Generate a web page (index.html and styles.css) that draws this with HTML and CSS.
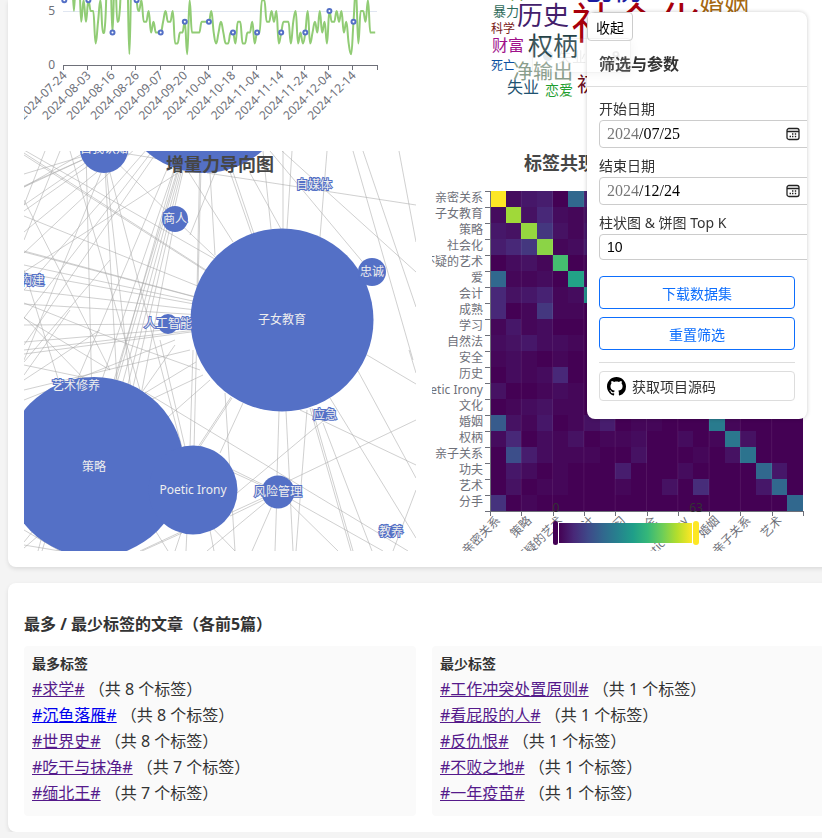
FILE: index.html
```html
<!DOCTYPE html>
<html lang="zh-CN">
<head>
<meta charset="utf-8">
<title>标签统计</title>
<link rel="stylesheet" href="styles.css">
</head>
<body>
<main class="page">
  <section class="card charts">
    <svg class="chart" id="trend" viewBox="0 0 392 135" role="img" aria-label="趋势图"></svg>
    <svg class="chart" id="cloud" viewBox="0 0 392 135" role="img" aria-label="词云"></svg>
    <svg class="chart" id="graph" viewBox="0 0 392 400" role="img" aria-label="增量力导向图"></svg>
    <svg class="chart" id="heat" viewBox="0 0 392 400" role="img" aria-label="标签共现热力图"></svg>
  </section>

  <section class="card articles">
    <h3 class="articles-title">最多 / 最少标签的文章（各前5篇）</h3>
    <div class="columns">
      <div class="box">
        <h4 class="box-title">最多标签</h4>
        <ul class="list">
          <li><a class="seen" href="#a1">#求学#</a> （共 8 个标签）</li>
          <li><a class="fresh" href="#a2">#沉鱼落雁#</a> （共 8 个标签）</li>
          <li><a class="seen" href="#a3">#世界史#</a> （共 8 个标签）</li>
          <li><a class="seen" href="#a4">#吃干与抹净#</a> （共 7 个标签）</li>
          <li><a class="seen" href="#a5">#缅北王#</a> （共 7 个标签）</li>
        </ul>
      </div>
      <div class="box">
        <h4 class="box-title">最少标签</h4>
        <ul class="list">
          <li><a class="seen" href="#b1">#工作冲突处置原则#</a> （共 1 个标签）</li>
          <li><a class="seen" href="#b2">#看屁股的人#</a> （共 1 个标签）</li>
          <li><a class="seen" href="#b3">#反仇恨#</a> （共 1 个标签）</li>
          <li><a class="seen" href="#b4">#不败之地#</a> （共 1 个标签）</li>
          <li><a class="seen" href="#b5">#一年疫苗#</a> （共 1 个标签）</li>
        </ul>
      </div>
    </div>
  </section>
</main>

<aside class="panel">
  <button class="collapse" type="button">收起</button>
  <h3 class="panel-title">筛选与参数</h3>
  <form class="filters">
    <label for="start">开始日期</label>
    <div class="field">
      <input class="date" id="start" type="text" value="2024/07/25">
      <svg class="calendar" viewBox="0 0 14 14" aria-hidden="true"><rect x="1" y="1.5" width="12" height="11" rx="2"/><path d="M1 4.5h12"/><path class="dots" d="M6 7h1.4M8.8 7h1.4M3.6 9.6H5M6 9.6h1.4M8.8 9.6h1.4"/></svg>
    </div>
    <label for="end">结束日期</label>
    <div class="field">
      <input class="date" id="end" type="text" value="2024/12/24">
      <svg class="calendar" viewBox="0 0 14 14" aria-hidden="true"><rect x="1" y="1.5" width="12" height="11" rx="2"/><path d="M1 4.5h12"/><path class="dots" d="M6 7h1.4M8.8 7h1.4M3.6 9.6H5M6 9.6h1.4M8.8 9.6h1.4"/></svg>
    </div>
    <label for="topk">柱状图 &amp; 饼图 Top K</label>
    <div class="field number"><input id="topk" type="number" value="10"></div>
    <button class="action" type="button">下载数据集</button>
    <button class="action" type="button">重置筛选</button>
  </form>
  <div class="source">
    <a class="repo" href="#source">
      <svg class="github" viewBox="0 0 16 16" aria-hidden="true"><path d="M8 0C3.58 0 0 3.58 0 8c0 3.54 2.29 6.53 5.47 7.59.4.07.55-.17.55-.38 0-.19-.01-.82-.01-1.49-2.01.37-2.53-.49-2.69-.94-.09-.23-.48-.94-.82-1.13-.28-.15-.68-.52-.01-.53.63-.01 1.08.58 1.23.82.72 1.21 1.87.87 2.33.66.07-.52.28-.87.51-1.07-1.78-.2-3.64-.89-3.64-3.95 0-.87.31-1.59.82-2.15-.08-.2-.36-1.02.08-2.12 0 0 .67-.21 2.2.82.64-.18 1.32-.27 2-.27s1.36.09 2 .27c1.53-1.04 2.2-.82 2.2-.82.44 1.1.16 1.92.08 2.12.51.56.82 1.27.82 2.15 0 3.07-1.87 3.75-3.65 3.95.29.25.54.73.54 1.48 0 1.07-.01 1.93-.01 2.2 0 .21.15.46.55.38A8.01 8.01 0 0 0 16 8c0-4.42-3.58-8-8-8z"/></svg>
      获取项目源码
    </a>
  </div>
</aside>
<div class="tooltip" aria-hidden="true"><span class="dot"></span>失业<b>9</b></div>
<script src="charts.js"></script>
</body>
</html>
```

FILE: styles.css
```css
* {
  box-sizing: border-box;
}

html {
  overflow: hidden;
}

body {
  margin: 0;
  background: #f4f4f4;
  color: #333;
  font-family: "Noto Sans", "Noto Sans CJK SC", sans-serif;
  font-size: 16px;
}

h3,
h4,
ul {
  margin: 0;
  padding: 0;
}

/* The cards run a little past the right edge of the window. */
.page {
  width: calc(100% + 10px);
  margin-left: 8px;
  display: grid;
  gap: 16px;
}

.card {
  background: #fff;
  border-radius: 8px;
  padding: 16px;
  box-shadow: 0 2px 4px rgba(0, 0, 0, 0.1);
}

.charts,
.columns {
  display: grid;
  grid-template-columns: 1fr 1fr;
  gap: 16px;
}

.charts {
  padding-top: 0;
  border-radius: 0 0 8px 8px;
}

.chart {
  display: block;
  width: 100%;
  overflow: hidden;
  font-size: 12px;
}

.chart text {
  dominant-baseline: central;
}

.axis {
  stroke: #6e7079;
  fill: none;
}

.split {
  stroke: #e0e6f1;
}

.tick-label {
  fill: #6e7079;
}

.series {
  fill: none;
  stroke: #91cc75;
  stroke-width: 2;
  stroke-linejoin: round;
}

.marker {
  fill: #fff;
  stroke: #5470c6;
  stroke-width: 2;
}

.edge {
  stroke: #aaa;
  stroke-opacity: 0.55;
}

.node {
  fill: #5470c6;
}

.node-label {
  fill: #eee;
  stroke: #5470c6;
  stroke-width: 2px;
  paint-order: stroke;
  text-anchor: middle;
}

.chart-title {
  fill: #464646;
  font-size: 18px;
  font-weight: bold;
  text-anchor: middle;
}

.cell {
  shape-rendering: crispEdges;
}

.seam {
  stroke: #fff;
  stroke-opacity: 0.08;
}

.end {
  text-anchor: end;
}

.middle {
  text-anchor: middle;
}

.articles {
  padding-top: 29px;
}

.articles-title {
  font-size: 16px;
  line-height: 24px;
  margin-bottom: 10px;
}

.box {
  background: #fafafa;
  border-radius: 4px;
  padding: 8px 8px 10px;
}

.box-title {
  font-size: 14px;
  line-height: 20px;
  margin-bottom: 2px;
}

.list {
  list-style: none;
  line-height: 26px;
}

.seen {
  color: #551a8b;
}

.fresh {
  color: #0000ee;
}

.panel {
  position: fixed;
  top: 12px;
  right: 15px;
  width: 220px;
  background: #fff;
  border-radius: 8px;
  box-shadow: 0 0 4px rgba(0, 0, 0, 0.2);
  overflow: hidden;
  font-size: 14px;
  padding-bottom: 18px;
}

.panel button {
  font-family: inherit;
  font-size: 14px;
  display: block;
  padding: 0;
}

.collapse {
  width: 46px;
  height: 29px;
  background: #fff;
  color: #000;
  border: 1px solid #ccc;
  border-radius: 4px;
}

.panel-title {
  font-size: 16px;
  line-height: 24px;
  padding: 11px 12px 10px;
  border-bottom: 1px solid #ddd;
}

.filters {
  padding: 12px 12px 0;
}

.filters label {
  display: block;
  line-height: 20px;
}

.field {
  position: relative;
  width: calc(100% + 18px);
  height: 28px;
  margin: 1px 0 8px;
  border: 1px solid #ccc;
  border-radius: 4px;
}

.field input {
  display: block;
  width: 100%;
  height: 100%;
  border: 0;
  padding: 0 7px;
  background: none;
  font-family: "Liberation Sans", sans-serif;
  font-size: 14px;
}

/* The year segment is dimmer than the rest of the date. */
.field .date {
  font-family: "Liberation Serif", serif;
  font-size: 16px;
  background: linear-gradient(90deg, #757575 39px, #000 39px);
  background-clip: text;
  -webkit-background-clip: text;
  color: transparent;
}

.number {
  height: 26px;
  margin-bottom: 16px;
}

.calendar {
  position: absolute;
  right: 12px;
  top: 6px;
  width: 14px;
  height: 14px;
  fill: none;
  stroke: #222;
  stroke-width: 1.3;
}

.dots {
  stroke-width: 1.5;
}

.panel .action {
  width: 100%;
  height: 33px;
  margin-bottom: 8px;
  background: #fff;
  border: 1px solid #0d6efd;
  border-radius: 4px;
  color: #0d6efd;
}

.source {
  margin: 12px 12px 0;
  padding-top: 8px;
  border-top: 1px solid #ddd;
}

.repo {
  display: flex;
  align-items: center;
  gap: 6px;
  height: 30px;
  padding: 0 7px;
  border: 1px solid #ddd;
  border-radius: 4px;
  color: #333;
  text-decoration: none;
}

.github {
  width: 19px;
  height: 19px;
  fill: #000;
}

/* Tooltip at the end of its fade-out. */
.tooltip {
  position: fixed;
  top: 38px;
  right: 191px;
  display: flex;
  align-items: center;
  gap: 5px;
  width: 99px;
  height: 35px;
  padding: 0 10px;
  background: #fff;
  border: 1px solid #999;
  border-radius: 4px;
  box-shadow: 1px 2px 10px rgba(0, 0, 0, 0.3);
  color: #666;
  font-size: 14px;
  opacity: 0.12;
}

.tooltip b {
  margin-left: auto;
}

.dot {
  width: 10px;
  height: 10px;
  border-radius: 50%;
  background: #1f5270;
}
```

FILE: charts.js
```js
const NS = 'http://www.w3.org/2000/svg';

function add(parent, tag, attrs, text) {
  const el = document.createElementNS(NS, tag);
  for (const key in attrs) el.setAttribute(key, attrs[key]);
  if (text !== undefined) el.textContent = text;
  parent.appendChild(el);
  return el;
}

function line(svg, cls, x1, y1, x2, y2) {
  add(svg, 'line', { class: cls, x1, y1, x2, y2 });
}

function drawTrend() {
  const svg = document.getElementById('trend');
  const values = [
    6,7,8,9,5,9,9,4,6,4, 9,5,5,2,4,6,3,4,9,9, 3,9,4,5,9,9,9,1,9,9,
    6,5,6,4,4,5,3,4,3,3, 3,4,5,4,4,5,2,2,3,3, 4,1,6,3,3,3,3,4,4,4,
    4,5,3,2,3,4,3,2,2,3, 3,2,4,4,2,2,3,3,4,2, 3,3,6,6,4,4,5,4,5,2,
    3,4,4,4,2,4,5,2,3,2, 3,5,2,3,4,3,5,3,4,2, 5,4,4,5,4,5,3,4,2,1,
    4,7,2,5,5,4,6,3,3,3
  ];
  values[10] = 6;
  const dates = ['2024-07-24','2024-08-03','2024-08-16','2024-08-26','2024-09-07','2024-09-20',
    '2024-10-04','2024-10-18','2024-11-04','2024-11-14','2024-11-24','2024-12-04','2024-12-14'];
  const step = 2.41;
  const px = i => 40.3 + i * step;
  const py = v => 65 - v * 10.8;
  line(svg, 'split', 39, 11.5, 353, 11.5);
  line(svg, 'axis', 39, 65.5, 354, 65.5);
  line(svg, 'axis', 353.5, 65, 353.5, 70);
  add(svg, 'text', { class: 'tick-label end', x: 31, y: 10 }, '5');
  add(svg, 'text', { class: 'tick-label end', x: 31, y: 64 }, '0');

  const slope = i => {
    if (i === 0 || i === values.length - 1) return 0;
    const a = values[i] - values[i - 1], b = values[i + 1] - values[i];
    return a * b <= 0 ? 0 : (a + b) / 2;
  };
  const reach = 0.45;
  let d = `M${px(0)} ${py(values[0])}`;
  for (let i = 1; i < values.length; i++) {
    d += `C${px(i - 1 + reach)} ${py(values[i - 1] + slope(i - 1) * reach)} ` +
         `${px(i - reach)} ${py(values[i] - slope(i) * reach)} ${px(i)} ${py(values[i])}`;
  }
  add(svg, 'path', { class: 'series', d });
  dates.forEach((date, k) => {
    const x = px(k * 10);
    const tick = Math.round(x - 1.2) + 0.5;
    line(svg, 'axis', tick, 65, tick, 70);
    add(svg, 'circle', { class: 'marker', cx: x, cy: py(values[k * 10]), r: 2 });
    add(svg, 'text', { class: 'tick-label end', transform: `translate(${x} 73) rotate(-45)` }, date);
  });
}

function drawCloud() {
  const svg = document.getElementById('cloud');
  [
    ['神', 86, -9, 20, '#5a8a14'], ['创伤', 181, -13, 30, '#1c1ca0'],
    ['暴力', 74, 11, 13, '#2e6b5a'], ['历史', 111, 15, 26, '#43206b'],
    ['科学', 71, 28, 12, '#7a1a1a'], ['财富', 76, 45, 16, '#a0108a'],
    ['权柄', 121, 45, 25, '#264348'], ['死亡', 71, 65, 12, '#0b4fa0'],
    ['净输出', 111, 71, 20, '#8a9e8c'], ['失业', 91, 87, 16, '#1f5270'],
    ['恋爱', 127, 89, 14, '#1f9d2f'], ['初恋', 165, 84, 20, '#6b1020'],
    ['社会化', 204, 22, 43, '#a8000c'], ['婚姻', 292, 3, 25, '#a5670f']
  ].forEach(([word, x, y, size, fill]) => {
    add(svg, 'text', { class: 'middle', x, y, 'font-size': size, fill }, word);
  });
}

function drawGraph() {
  const svg = add(document.getElementById('graph'), 'g', { transform: 'translate(-24 -151)' });
  const edges = [
    [24,155,206,271],[24,153,206,270],[24,150,220,262],[104,150,24,187],[104,150,24,186],[104,150,24,205],
    [104,150,24,174],[282,320,24,252],[282,320,24,251],[282,320,24,265],[282,320,24,273],[282,320,24,290],
    [282,320,24,304],[168,324,24,325],[282,320,24,216],[282,320,24,342],[282,320,24,350],[282,320,24,354],
    [203,85,24,187],[203,85,24,232],[203,85,24,253],[203,85,24,290],[203,85,24,318],[203,85,24,345],
    [203,85,75,385],[203,85,95,400],[203,85,108,400],[203,85,112,400],[203,85,118,400],[203,85,124,400],
    [203,85,130,400],[203,85,24,211],[260,120,24,272],[203,85,193,490],[180,151,110,400],
    [104,150,118,400],[104,150,193,490],[104,150,132,400],[86,151,92,400],[104,150,175,219],[104,150,203,166],
    [24,200,110,370],[70,151,140,390],[45,151,24,205],[24,318,110,370],[24,317,90,385],[60,151,24,240],
    [24,303,130,345],[130,345,200,370],[24,270,60,385],[24,375,70,310],[24,362,110,260],[24,380,100,330],
    [24,365,120,385],[24,400,175,340],[24,390,190,350],[175,219,282,320],[175,219,140,400],[110,151,24,360],
    [270,151,371,272],[282,151,416,272],[353,151,413,360],[363,151,416,307],[399,151,416,242],[327,151,320,237],
    [292,151,287,229],[283,151,283,229],[263,151,271,229],[250,173,281,229],[230,172,252,235],[233,172,254,234],
    [207,173,416,205],[186,168,233,242],[210,173,215,255],[215,173,190,235],[200,151,197,290],
    [367,355,416,384],[409,350,416,373],[358,371,416,478],[330,398,416,538],[300,410,416,465],[416,420,278,486],
    [145,392,408,551],[237,493,323,421],[279,411,277,477],[286,411,293,551],[307,410,296,551],[310,408,351,551],
    [312,408,353,551],[323,423,372,551],[416,490,393,551],[278,492,383,551],[278,492,338,551],[278,492,252,551],
    [277,492,275,551],[278,492,207,551],[233,470,278,492],[230,471,278,493],[230,513,278,491],[230,516,278,493],
    [208,520,214,551],[205,520,235,551],[225,393,235,551],[231,397,198,447],[232,398,199,448],[243,403,220,453],
    [196,362,145,393],[203,375,150,400],[210,380,168,417],[193,350,190,447],[160,340,185,447],[175,345,140,395],
    [24,530,60,551],[24,545,60,551],[45,525,38,551],[24,548,45,530],[24,542,42,520],[185,530,140,551],
    [182,530,175,551],[187,530,186,551],[155,530,168,551],[182,533,142,551],[50,525,42,551]
  ];
  edges.forEach(e => line(svg, 'edge', ...e));
  const nodes = [
    ['自我认知', 104, 149, 24], ['', 204, 85, 88], ['商人', 175, 219, 13], ['子女教育', 282, 320, 91.5],
    ['忠诚', 372, 272, 14], ['人工智能', 168, 324, 10], ['自媒体', 314, 185, 6], ['自我构建', 20, 281, 4],
    ['策略', 94, 467, 90], ['艺术修养', 76, 386, 6], ['Poetic Irony', 193, 490, 44.5],
    ['风险管理', 278, 492, 16.5], ['应急', 325, 415, 6], ['教养', 391, 532, 6]
  ];
  nodes.forEach(([, cx, cy, r]) => add(svg, 'circle', { class: 'node', cx, cy, r }));
  nodes.forEach(([name, x, y]) => {
    if (name) add(svg, 'text', { class: 'node-label', x, y: y - 1 }, name);
  });
  add(svg, 'text', { class: 'chart-title', x: 220, y: 164 }, '增量力导向图');
}

function drawHeat() {
  const svg = document.getElementById('heat');
  const tags = ['亲密关系','子女教育','策略','社会化','怀疑的艺术','爱','会计','成熟','学习','自然法',
    '安全','历史','Poetic Irony','文化','婚姻','权柄','亲子关系','功夫','艺术','分手'];
  const rows = [
    [63,2,4,5,0,21,6],
    [2,54,3,7,2,1,3],
    [4,3,53,10,3,1,4],
    [5,7,10,52,1,2,5],
    [0,2,3,1,44,0,1],
    [21,1,1,2,0,36,2],
    [7,3,4,6,1,2,32],
    [7,0,1,10,1,1,0],
    [1,4,1,2,0,0,0],
    [2,3,4,2,2,1,0],
    [1,2,1,0,1,0,0],
    [0,2,1,2,7,0,0],
    [3,0,0,1,2,1,0],
    [0,1,2,3,1,1,0],
    [18,3,1,4,0,1,3,5,0,1,1,0,0,0,26,1],
    [2,7,0,2,1,3,0,1,1,2,0,0,2,0,1,25,3],
    [0,15,5,2,1,1,1,0,0,3,0,0,0,1,0,3,24],
    [0,4,2,0,1,0,0,0,5,0,0,0,2,0,0,0,0,21,4],
    [0,3,0,1,1,0,0,0,1,0,0,3,0,8,0,0,0,4,21],
    [9,0,1,0,0,0,0,0,0,0,0,0,0,0,0,0,0,0,0,21]
  ];
  const scale = [[68,1,84],[72,40,120],[62,74,137],[49,104,142],[38,130,142],
    [31,158,137],[53,183,121],[109,205,89],[180,222,44],[253,231,37]];
  const color = v => {
    const t = v / 63 * (scale.length - 1);
    const i = Math.min(Math.floor(t), scale.length - 2);
    return `rgb(${scale[i].map((c, k) => Math.round(c + (scale[i + 1][k] - c) * (t - i)))})`;
  };
  const left = 58, top = 40, w = 15.65, h = 16;
  add(svg, 'rect', { x: left, y: top, width: w * 20, height: 320, fill: color(0) });
  rows.forEach((row, r) => row.forEach((v, c) => {
    if (v) add(svg, 'rect', { class: 'cell', x: left + c * w, y: top + r * h, width: w, height: h, fill: color(v) });
  }));
  for (let c = 2; c < 20; c += 2) line(svg, 'seam', left + c * w, top, left + c * w, 360);

  line(svg, 'axis', 58.5, 40, 58.5, 360);
  line(svg, 'axis', 58, 360.5, 372, 360.5);
  for (let i = 0; i <= 20; i++) line(svg, 'axis', 53, top + i * h + 0.5, 58, top + i * h + 0.5);
  for (let i = 0; i <= 20; i += 2) {
    const x = Math.round(left + i * w) + 0.5;
    line(svg, 'axis', x, 360, x, 365);
  }
  tags.forEach((tag, i) => {
    add(svg, 'text', { class: 'tick-label end', x: 51, y: top + i * h + 6 }, tag);
    if (i % 2 === 0) {
      add(svg, 'text', { class: 'tick-label end', transform: `translate(${left + (i + 0.5) * w} 367) rotate(-45)` }, tag);
    }
  });

  const gradient = add(add(svg, 'defs', {}), 'linearGradient', { id: 'viridis' });
  scale.forEach((c, i) => add(gradient, 'stop', { offset: i / (scale.length - 1), 'stop-color': `rgb(${c})` }));
  add(svg, 'rect', { x: 126, y: 372, width: 135, height: 20, fill: '#fff' });
  add(svg, 'rect', { x: 127, y: 372, width: 133, height: 20, fill: 'url(#viridis)' });
  add(svg, 'rect', { x: 121, y: 370, width: 5, height: 24, rx: 2.5, fill: color(0) });
  add(svg, 'rect', { x: 261, y: 370, width: 6, height: 24, rx: 3, fill: color(63) });
  add(svg, 'text', { class: 'middle', x: 124, y: 356, fill: '#333' }, '0');
  add(svg, 'text', { class: 'middle', x: 264, y: 356, fill: '#333' }, '63');
  add(svg, 'text', { class: 'chart-title', x: 192, y: 12 }, '标签共现热力图 (Top 20)');
}

drawTrend();
drawCloud();
drawGraph();
drawHeat();
```
